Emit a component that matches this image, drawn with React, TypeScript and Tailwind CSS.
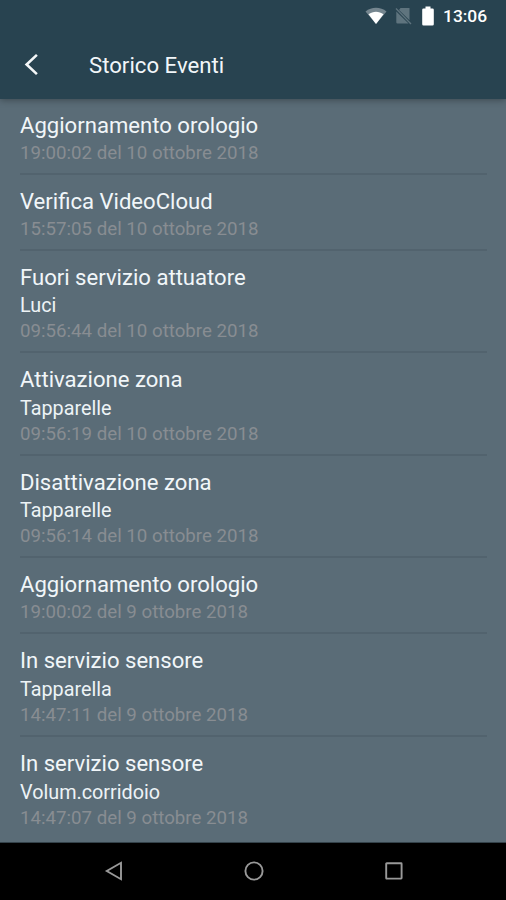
type HistoryEvent = {
  title: string;
  detail?: string;
  date: string;
};

const events: HistoryEvent[] = [
  { title: "Aggiornamento orologio", date: "19:00:02 del 10 ottobre 2018" },
  { title: "Verifica VideoCloud", date: "15:57:05 del 10 ottobre 2018" },
  { title: "Fuori servizio attuatore", detail: "Luci", date: "09:56:44 del 10 ottobre 2018" },
  { title: "Attivazione zona", detail: "Tapparelle", date: "09:56:19 del 10 ottobre 2018" },
  { title: "Disattivazione zona", detail: "Tapparelle", date: "09:56:14 del 10 ottobre 2018" },
  { title: "Aggiornamento orologio", date: "19:00:02 del 9 ottobre 2018" },
  { title: "In servizio sensore", detail: "Tapparella", date: "14:47:11 del 9 ottobre 2018" },
  { title: "In servizio sensore", detail: "Volum.corridoio", date: "14:47:07 del 9 ottobre 2018" },
];

export default function App() {
  return (
    <div className="flex h-[900px] w-[506px] flex-col overflow-hidden bg-[#5a6c77] font-['Roboto',sans-serif]">
      <header className="z-10 h-[98.5px] shrink-0 bg-[#284350] shadow-[0_1px_7px_rgba(0,0,0,0.35)]">
        <StatusBar />
        <div className="flex h-[66px] items-center pl-[23px]">
          <button aria-label="Indietro" className="w-[66px]">
            <svg width="16" height="24" viewBox="0 0 16 24" fill="none" stroke="#f4f7f8" strokeWidth="2.6">
              <path d="M13.9 1.9 3.6 11.5l10.3 9.6" />
            </svg>
          </button>
          <h1 className="text-[22.2px] leading-7 text-[#f1f6f9]">Storico Eventi</h1>
        </div>
      </header>

      <main className="min-h-0 flex-1 overflow-hidden px-5">
        {events.map((event, index) => (
          <EventRow key={index} event={event} last={index === events.length - 1} />
        ))}
      </main>

      <NavigationBar />
    </div>
  );
}

/* Single history entry */

function EventRow({ event, last }: { event: HistoryEvent; last: boolean }) {
  return (
    <div className={`pt-[12px] pb-[7px] -mr-px border-b-2 ${last ? "border-transparent" : "border-[#52636e]"}`}>
      <p className="pb-px text-[22.1px] leading-7 text-[#f1f6f9]">{event.title}</p>
      {event.detail && (
        <p className="pt-[1.4px] text-[19.8px] leading-[25.27px] text-[#edf3f6]">{event.detail}</p>
      )}
      <p className="text-[18.7px] leading-[26px] text-[#888d92]">{event.date}</p>
    </div>
  );
}

/* Android status bar */

function StatusBar() {
  return (
    <div className="flex h-8 items-center justify-end pr-[18px]">
      <svg width="22" height="18" viewBox="0 0 22 18" className="mr-[8px]">
        <path d="M0.5 4.5C6.5-.5 15.5-.5 21.5 4.5L11 17Z" fill="#75868f" />
        <path d="M3.5 7.2C8 3.8 14 3.8 18.5 7.2L11 17Z" fill="#fff" />
      </svg>
      <svg width="17" height="18" viewBox="0 0 17 18" className="mr-[10px]">
        <path d="M5.5 1H14.5V13.3L4 3ZM1.3 4.5 13.5 16.5H2.5Q1.3 16.5 1.3 15.3Z" fill="#5f747e" />
        <path d="M1 1.5 16 17" stroke="#5f747e" strokeWidth="1.3" />
      </svg>
      <svg width="12" height="20" viewBox="0 0 12 20" className="mr-[9px]">
        <path d="M3.5 0.5h5v2h2q1.3 0 1.3 1.3v14.4q0 1.3-1.3 1.3h-9q-1.3 0-1.3-1.3V3.8q0-1.3 1.3-1.3h2Z" fill="#fff" />
      </svg>
      <span className="w-[45px] text-[17.4px] font-medium leading-5 text-white">13:06</span>
    </div>
  );
}

/* Android navigation bar */

function NavigationBar() {
  return (
    <nav className="flex h-[58px] shrink-0 items-center justify-center gap-[120px] border-t border-[#34424a] bg-black pb-[1.5px] pl-px">
      <svg width="20" height="20" viewBox="0 0 20 20" fill="none" stroke="#999" strokeWidth="1.9">
        <path d="M17 1.8v16.4L2.8 10Z" />
      </svg>
      <svg width="20" height="20" viewBox="0 0 20 20" fill="none" stroke="#999" strokeWidth="1.9">
        <circle cx="10" cy="10" r="8.6" />
      </svg>
      <svg width="20" height="20" viewBox="0 0 20 20" fill="none" stroke="#999" strokeWidth="1.9">
        <rect x="2.2" y="2.2" width="15.4" height="15.4" rx="0.5" />
      </svg>
    </nav>
  );
}
